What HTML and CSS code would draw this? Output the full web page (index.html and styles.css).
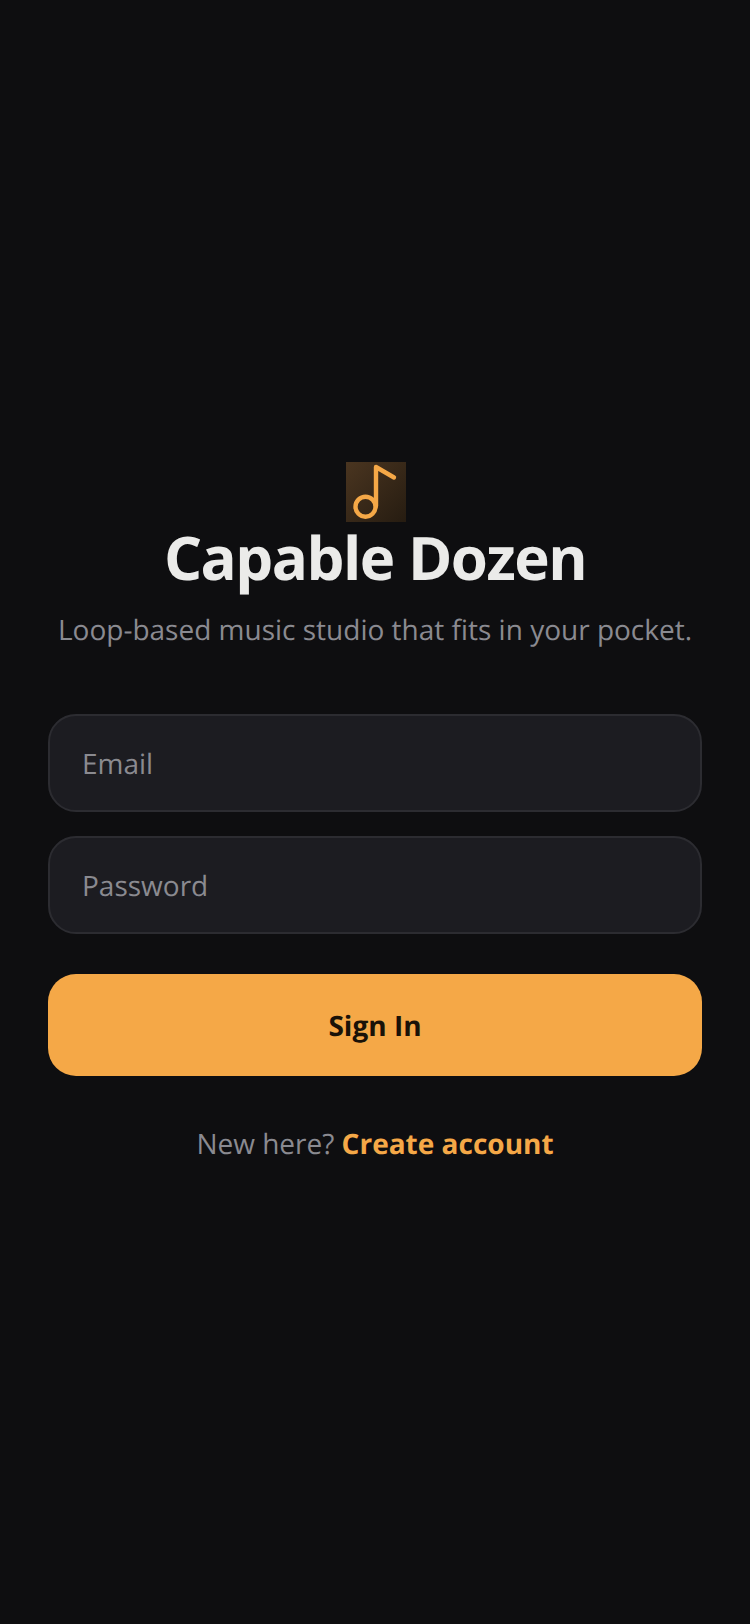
FILE: index.html
```html
<!DOCTYPE html>
<html lang="en">

<head>
    <meta charset="UTF-8">
    <meta name="viewport" content="width=device-width, initial-scale=1.0">
    <title>Capable Dozen</title>
    <link rel="stylesheet" href="styles.css">
</head>

<body>
    <main class="login">
        <div class="brand">
            <div class="logo">
                <svg width="60" height="60" viewBox="0 0 60 60" fill="none" stroke="#f5a847" stroke-width="4.4" stroke-linecap="round" stroke-linejoin="round">
                    <circle cx="19.5" cy="44.7" r="10"></circle>
                    <path d="M30 44V5L48 15.5"></path>
                </svg>
            </div>
            <h1 class="title">Capable Dozen</h1>
            <p class="tagline">Loop-based music studio that fits in your pocket.</p>
        </div>
        <form class="form">
            <input class="field" type="email" placeholder="Email">
            <input class="field" type="password" placeholder="Password">
            <button class="submit" type="button">Sign In</button>
        </form>
        <p class="signup">New here? <a href="#">Create account</a></p>
    </main>
</body>

</html>
```

FILE: styles.css
```css
* {
    box-sizing: border-box;
}

body {
    margin: 0;
    background-color: #0e0e10;
    font-family: "Open Sans", sans-serif;
    text-rendering: geometricPrecision;
}

.login {
    min-height: 1624px;
    padding: 2px 48px 0;
    display: flex;
    flex-direction: column;
    justify-content: center;
}

.brand {
    display: flex;
    flex-direction: column;
    align-items: center;
}

.logo {
    width: 60px;
    height: 60px;
    margin-left: 2px;
    background: linear-gradient(135deg, #4a3520, #261c11);
}

.logo svg {
    display: block;
}

.title {
    margin: 0;
    font-size: 60px;
    line-height: 70px;
    font-weight: 700;
    letter-spacing: -1.5px;
    color: #ebebe9;
}

.tagline {
    margin: 18px 0 0;
    font-size: 28px;
    line-height: 40px;
    color: #8a8a90;
    white-space: nowrap;
}

.form {
    margin-top: 64px;
    display: flex;
    flex-direction: column;
    gap: 24px;
}

.field {
    width: 100%;
    height: 98px;
    padding: 2px 32px 0;
    background-color: #1c1c21;
    border: 2px solid #2c2c31;
    border-radius: 28px;
    font-family: inherit;
    font-size: 28px;
    color: #ebebe9;
    outline: none;
    text-rendering: inherit;
}

.field::placeholder {
    color: #8a8a90;
    opacity: 1;
}

.submit {
    height: 102px;
    margin-top: 16px;
    padding: 2px 0 0;
    background-color: #f5a847;
    border: none;
    border-radius: 28px;
    font-family: inherit;
    font-size: 28px;
    font-weight: 700;
    color: #1a1208;
    text-rendering: inherit;
}

.signup {
    margin: 48px 0 0;
    text-align: center;
    font-size: 28px;
    line-height: 40px;
    color: #8a8a90;
}

.signup a {
    font-weight: 700;
    color: #f5a847;
    text-decoration: none;
}
```
